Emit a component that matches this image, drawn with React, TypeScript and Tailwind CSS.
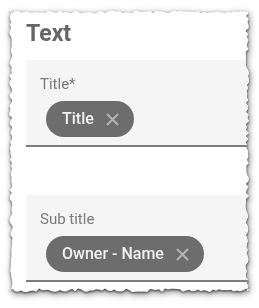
import React from 'react';

// torn paper outline, computed once from a fixed seed
const PAPER_W = 240;
const PAPER_H = 282;

function tornPolygon(w: number, h: number, depth: number) {
  let seed = 7;
  const rand = () => {
    seed = (seed * 16807) % 2147483647;
    return (seed - 1) / 2147483646;
  };
  const pts: string[] = [];
  const step = 3;
  for (let x = 0; x <= w; x += step) pts.push(`${x}px ${(rand() * depth).toFixed(1)}px`);
  for (let y = 0; y <= h; y += step) pts.push(`${(w - rand() * depth).toFixed(1)}px ${y}px`);
  for (let x = w; x >= 0; x -= step) pts.push(`${x}px ${(h - rand() * depth).toFixed(1)}px`);
  for (let y = h; y >= 0; y -= step) pts.push(`${(rand() * depth).toFixed(1)}px ${y}px`);
  return `polygon(${pts.join(', ')})`;
}

const CloseIcon: React.FC = () => (
  <svg width="13" height="13" viewBox="0 0 13 13" className="shrink-0">
    <path d="M1 1L12 12M12 1L1 12" stroke="#b4b4b4" strokeWidth="2" strokeLinecap="butt" />
  </svg>
);

const Chip: React.FC<{ label: string }> = ({ label }) => (
  <div className="inline-flex items-center h-[36px] rounded-full bg-[#6d6d6d] pl-[16px] pr-[15px] gap-[12px]">
    <span className="text-[16px] font-medium text-[#f2f2f2] leading-none">{label}</span>
    <CloseIcon />
  </div>
);

const Field: React.FC<{ label: string; value: string }> = ({ label, value }) => (
  <div className="bg-[#f5f5f5] border-b-2 border-[#7c7c7c] pl-[14px] pt-[14px] pb-[8px]">
    <div className="text-[15px] leading-[20px] text-[#7a7a7a]">{label}</div>
    <div className="mt-[7px] ml-[6px] flex">
      <Chip label={value} />
    </div>
  </div>
);

export default function App() {
  const clip = tornPolygon(PAPER_W, PAPER_H, 3.5);

  return (
    <div
      className="w-[259px] h-[308px] bg-white pl-[9px] pt-[10px] overflow-hidden"
      style={{ fontFamily: 'Roboto, "Liberation Sans", sans-serif' }}
    >
      <div className="w-[240px] [filter:drop-shadow(0_1px_1px_rgba(0,0,0,0.6))_drop-shadow(1px_2px_3px_rgba(0,0,0,0.5))]">
        <div className="w-[240px] h-[282px] bg-white pl-[17px] pt-[10px]" style={{ clipPath: clip }}>
          <h1 className="text-[23px] leading-[28px] font-bold text-[#666666]">Text</h1>
          <div className="mt-[12px] flex flex-col gap-[48px]">
            <Field label="Title*" value="Title" />
            <Field label="Sub title" value="Owner - Name" />
          </div>
        </div>
      </div>
    </div>
  );
}
